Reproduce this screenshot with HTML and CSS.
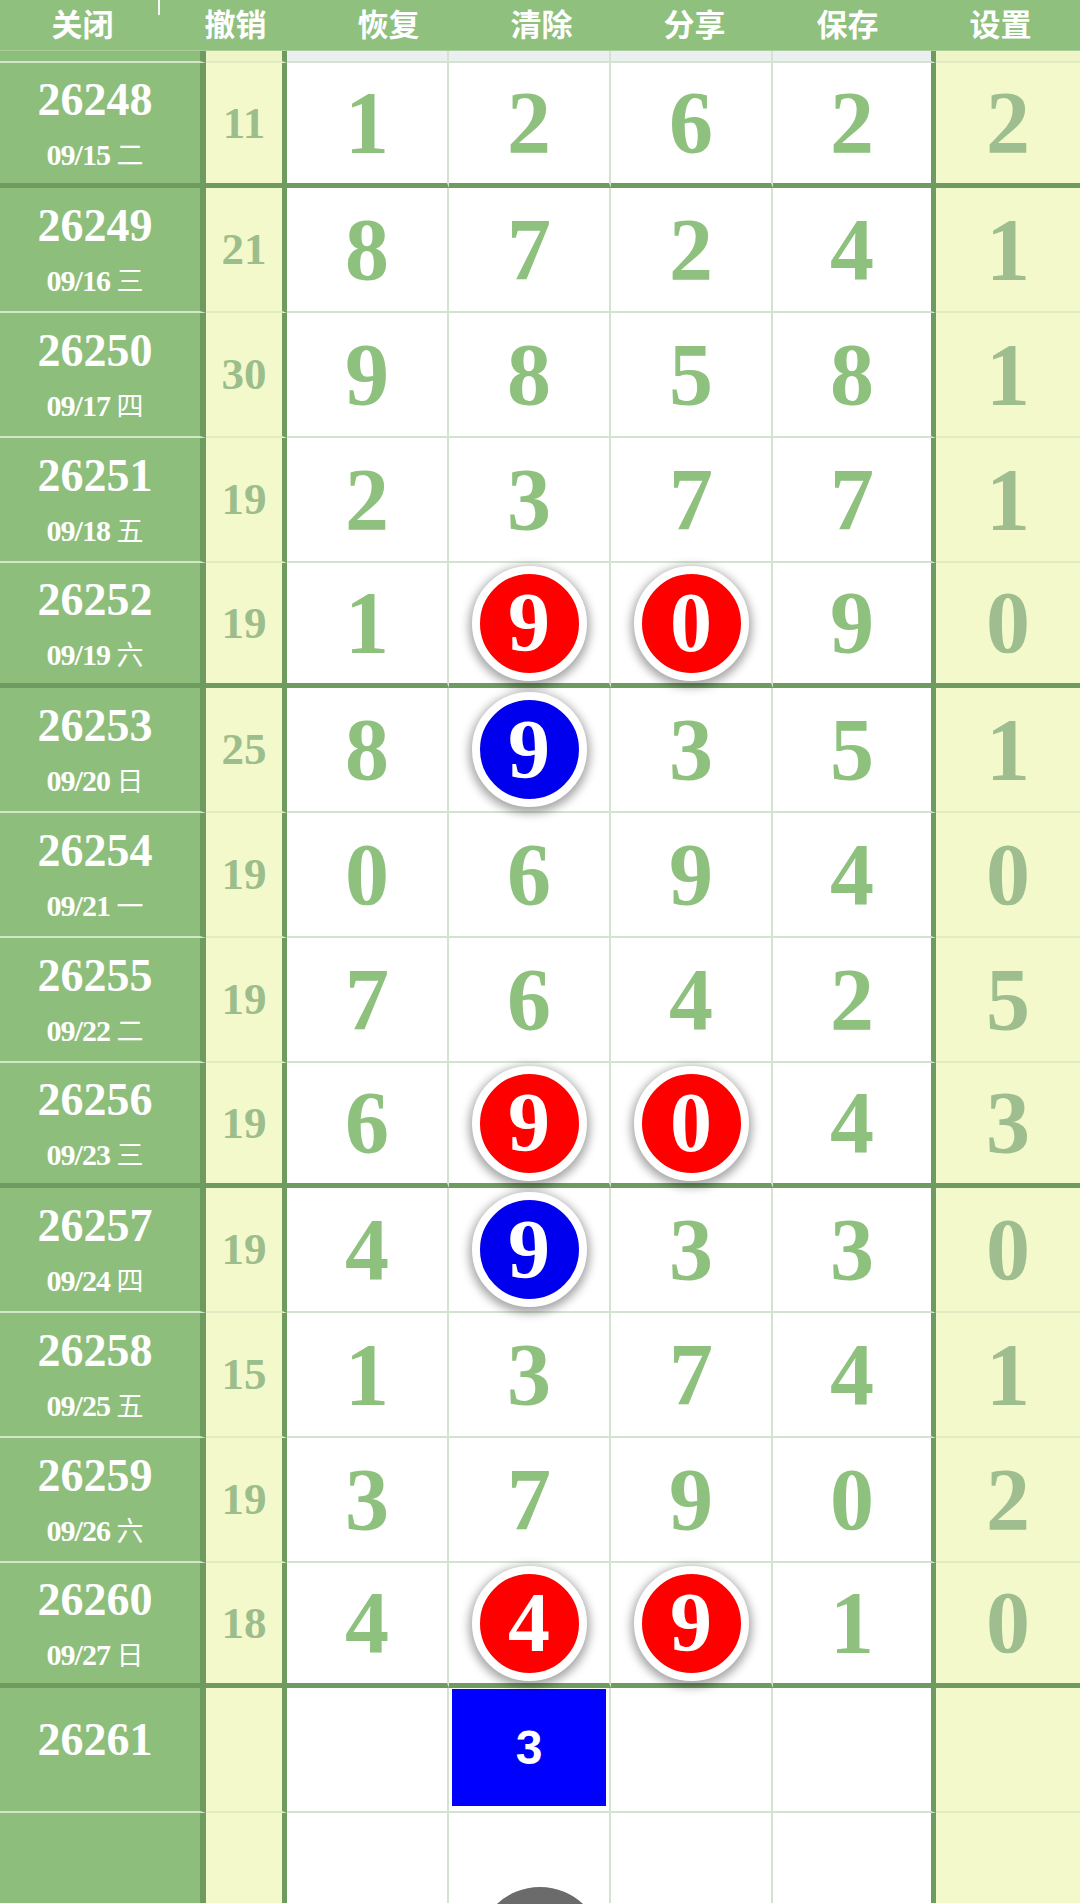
FILE: index.html
```html
<!DOCTYPE html>
<html lang="zh-CN">
<head>
<meta charset="utf-8">
<title>走势图</title>
<link rel="stylesheet" href="styles.css">
</head>
<body>
<div class="head">
  <span class="hb">关闭</span><span class="sep"></span><span class="hb">撤销</span><span class="hb">恢复</span><span class="hb">清除</span><span class="hb">分享</span><span class="hb">保存</span><span class="hb">设置</span>
</div>
<div class="table">
  <div class="row strip">
    <div class="c no"></div><div class="c nar"></div><div class="c w"></div><div class="c w"></div><div class="c w"></div><div class="c w last"></div><div class="c y"></div>
  </div>
  <div class="row grp">
    <div class="c no"><div class="num">26248</div><div class="date">09/15 <span class="wk">二</span></div></div>
    <div class="c nar">11</div>
    <div class="c w">1</div><div class="c w">2</div><div class="c w">6</div><div class="c w last">2</div>
    <div class="c y">2</div>
  </div>
  <div class="row">
    <div class="c no"><div class="num">26249</div><div class="date">09/16 <span class="wk">三</span></div></div>
    <div class="c nar">21</div>
    <div class="c w">8</div><div class="c w">7</div><div class="c w">2</div><div class="c w last">4</div>
    <div class="c y">1</div>
  </div>
  <div class="row">
    <div class="c no"><div class="num">26250</div><div class="date">09/17 <span class="wk">四</span></div></div>
    <div class="c nar">30</div>
    <div class="c w">9</div><div class="c w">8</div><div class="c w">5</div><div class="c w last">8</div>
    <div class="c y">1</div>
  </div>
  <div class="row">
    <div class="c no"><div class="num">26251</div><div class="date">09/18 <span class="wk">五</span></div></div>
    <div class="c nar">19</div>
    <div class="c w">2</div><div class="c w">3</div><div class="c w">7</div><div class="c w last">7</div>
    <div class="c y">1</div>
  </div>
  <div class="row grp">
    <div class="c no"><div class="num">26252</div><div class="date">09/19 <span class="wk">六</span></div></div>
    <div class="c nar">19</div>
    <div class="c w">1</div><div class="c w"><span class="ball red">9</span></div><div class="c w"><span class="ball red">0</span></div><div class="c w last">9</div>
    <div class="c y">0</div>
  </div>
  <div class="row">
    <div class="c no"><div class="num">26253</div><div class="date">09/20 <span class="wk">日</span></div></div>
    <div class="c nar">25</div>
    <div class="c w">8</div><div class="c w"><span class="ball blue">9</span></div><div class="c w">3</div><div class="c w last">5</div>
    <div class="c y">1</div>
  </div>
  <div class="row">
    <div class="c no"><div class="num">26254</div><div class="date">09/21 <span class="wk">一</span></div></div>
    <div class="c nar">19</div>
    <div class="c w">0</div><div class="c w">6</div><div class="c w">9</div><div class="c w last">4</div>
    <div class="c y">0</div>
  </div>
  <div class="row">
    <div class="c no"><div class="num">26255</div><div class="date">09/22 <span class="wk">二</span></div></div>
    <div class="c nar">19</div>
    <div class="c w">7</div><div class="c w">6</div><div class="c w">4</div><div class="c w last">2</div>
    <div class="c y">5</div>
  </div>
  <div class="row grp">
    <div class="c no"><div class="num">26256</div><div class="date">09/23 <span class="wk">三</span></div></div>
    <div class="c nar">19</div>
    <div class="c w">6</div><div class="c w"><span class="ball red">9</span></div><div class="c w"><span class="ball red">0</span></div><div class="c w last">4</div>
    <div class="c y">3</div>
  </div>
  <div class="row">
    <div class="c no"><div class="num">26257</div><div class="date">09/24 <span class="wk">四</span></div></div>
    <div class="c nar">19</div>
    <div class="c w">4</div><div class="c w"><span class="ball blue">9</span></div><div class="c w">3</div><div class="c w last">3</div>
    <div class="c y">0</div>
  </div>
  <div class="row">
    <div class="c no"><div class="num">26258</div><div class="date">09/25 <span class="wk">五</span></div></div>
    <div class="c nar">15</div>
    <div class="c w">1</div><div class="c w">3</div><div class="c w">7</div><div class="c w last">4</div>
    <div class="c y">1</div>
  </div>
  <div class="row">
    <div class="c no"><div class="num">26259</div><div class="date">09/26 <span class="wk">六</span></div></div>
    <div class="c nar">19</div>
    <div class="c w">3</div><div class="c w">7</div><div class="c w">9</div><div class="c w last">0</div>
    <div class="c y">2</div>
  </div>
  <div class="row grp">
    <div class="c no"><div class="num">26260</div><div class="date">09/27 <span class="wk">日</span></div></div>
    <div class="c nar">18</div>
    <div class="c w">4</div><div class="c w"><span class="ball red">4</span></div><div class="c w"><span class="ball red">9</span></div><div class="c w last">1</div>
    <div class="c y">0</div>
  </div>
  <div class="row next">
    <div class="c no single"><div class="num">26261</div></div>
    <div class="c nar"></div>
    <div class="c w"></div><div class="c w boxcell"><span class="box">3</span></div><div class="c w"></div><div class="c w last"></div>
    <div class="c y"></div>
  </div>
  <div class="row tail">
    <div class="c no"></div><div class="c nar"></div><div class="c w"></div><div class="c w"></div><div class="c w"></div><div class="c w last"></div><div class="c y"></div>
  </div>
</div>
<div class="fab-clip"><div class="fab"></div></div>
</body>
</html>
```
FILE: styles.css
```css
body {
  margin: 0;
  width: 1080px;
  height: 1904px;
  overflow: hidden;
  position: relative;
  background: #ffffff;
  font-family: "Liberation Serif", "Noto Sans CJK SC", serif;
}

.head {
  height: 50px;
  background: #8fc07e;
  display: flex;
  align-items: flex-start;
  padding-left: 6px;
  color: #ffffff;
  font-family: "Noto Sans CJK SC", sans-serif;
  font-weight: 700;
  font-size: 31px;
  line-height: 45px;
  border-bottom: 1px solid #a9cf9b;
}

.hb {
  width: 153px;
  text-align: center;
}

.sep {
  width: 2px;
  height: 15px;
  margin: 0 -1px;
  background: rgba(255, 255, 255, 0.9);
}

.row {
  display: grid;
  grid-template-columns: 206px 81px 162px 162px 162px 163px 144px;
  height: 125px;
}

.c {
  box-sizing: border-box;
  border-bottom: 2px solid;
  display: flex;
  align-items: center;
  justify-content: center;
  min-width: 0;
  font-weight: 700;
  line-height: 1;
}

.no {
  background: #8dbe7c;
  border-right: 6px solid #6e9c60;
  border-bottom-color: #d2e7c8;
  color: #ffffff;
  flex-direction: column;
  padding-right: 10px;
}

.num {
  font-size: 46px;
  line-height: 56px;
}

.date {
  font-size: 30px;
  line-height: 40px;
  margin-top: 6px;
  letter-spacing: -1px;
}

.wk {
  font-family: "Noto Sans CJK SC", sans-serif;
  font-weight: 400;
  font-size: 27px;
  letter-spacing: 0;
}

.single {
  padding-bottom: 20px;
}

.nar {
  background: #f4f9cb;
  border-right: 5px solid #6e9c60;
  border-bottom-color: #e3ebc3;
  color: #9cbd8c;
  font-size: 45px;
}

.w {
  background: #ffffff;
  border-right: 2px solid #d4e3d0;
  border-bottom-color: #d4e3d0;
  color: #8ec07e;
  font-size: 88px;
}

.w.last {
  border-right: 5px solid #6e9c60;
}

.y {
  background: #f4f9cb;
  border-bottom-color: #e3ebc3;
  color: #9fbe8f;
  font-size: 88px;
}

.grp .c {
  border-bottom: 5px solid #6e9c60;
}

.strip {
  height: 12px;
}

.strip .w {
  background: #eceff2;
}

.strip .nar,
.strip .y {
  background: #f0f5c8;
}

.tail {
  height: 90px;
}

.tail .c {
  border-bottom: none;
}

.ball {
  position: relative;
  z-index: 1;
  box-sizing: border-box;
  width: 115px;
  height: 115px;
  border-radius: 50%;
  border: 8px solid #ffffff;
  box-shadow: 0 3px 10px 3px rgba(0, 0, 0, 0.35);
  display: flex;
  align-items: center;
  justify-content: center;
  color: #ffffff;
  font-size: 84px;
  line-height: 1;
}

.red {
  background: #ff0000;
}

.blue {
  background: #0000ee;
}

.boxcell {
  align-items: stretch;
  justify-content: stretch;
  padding: 1px 3px 5px 3px;
}

.box {
  flex: 1;
  display: flex;
  align-items: center;
  justify-content: center;
  background: #0000ff;
  color: #ffffff;
  font-family: "Liberation Sans", Arial, sans-serif;
  font-weight: 700;
  font-size: 48px;
}

.fab-clip {
  position: absolute;
  left: 477px;
  top: 1887px;
  width: 126px;
  height: 17px;
  overflow: hidden;
}

.fab {
  width: 126px;
  height: 126px;
  border-radius: 50%;
  background: #6b6b6b;
}
```
